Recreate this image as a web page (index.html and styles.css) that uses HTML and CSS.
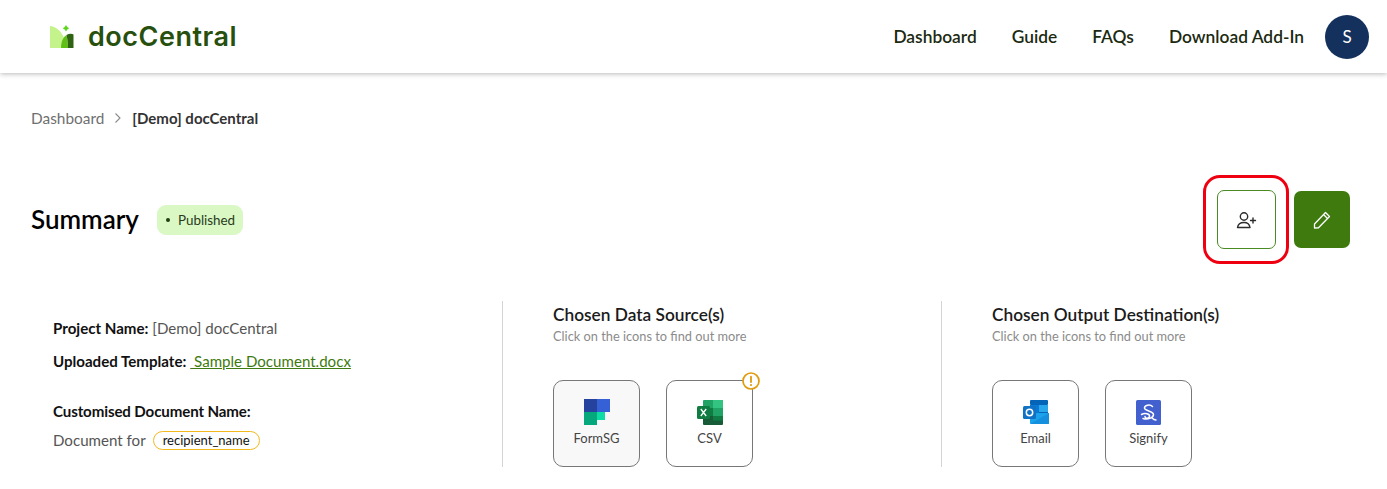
FILE: index.html
```html
<!DOCTYPE html>
<html lang="en">
<head>
<meta charset="utf-8">
<title>docCentral</title>
<link rel="stylesheet" href="styles.css">
</head>
<body>
<header class="topbar">
  <div class="brand">
    <svg class="brand-mark" width="24" height="23" viewBox="0 0 24 23">
      <path d="M0 1 C8 2 14 8 17 23 H0 Z" fill="#c4f28b"/>
      <path d="M11 23 C11 17 13 12 16.500 10 C17.500 14 18 19 18 23 Z" fill="#5fbf14"/>
      <path d="M16.500 10 C19 8.500 22 8.500 23.500 9.500 V23 H18 C18 19 17.500 14 16.500 10 Z" fill="#2f6212"/>
      <path d="M16 0 L17.300 2 L19.300 3.300 L17.300 4.600 L16 6.600 L14.700 4.600 L12.700 3.300 L14.700 2 Z" fill="#5fd61e"/>
    </svg>
    <span class="brand-name">docCentral</span>
  </div>
  <nav class="nav">
    <a>Dashboard</a>
    <a>Guide</a>
    <a>FAQs</a>
    <a>Download Add-In</a>
    <span class="avatar">S</span>
  </nav>
</header>
<main class="page">
  <div class="crumbs">
    <span class="crumb-link">Dashboard</span>
    <svg class="crumb-sep" width="8" height="12" viewBox="0 0 8 12"><path d="M1.500 1.500 L6 6 L1.500 10.500" fill="none" stroke="#8a8a8a" stroke-width="1.100"/></svg>
    <span class="crumb-current">[Demo] docCentral</span>
  </div>
  <section class="summary-head">
    <div class="title-group">
      <h1>Summary</h1>
      <span class="badge"><i class="dot"></i>Published</span>
    </div>
    <div class="actions">
      <div class="highlight">
        <button class="btn-outline" aria-label="Share">
          <svg width="22" height="22" viewBox="1 0 22 22" fill="none" stroke="#2b2b2b" stroke-width="1.400" stroke-linecap="round"><circle cx="9" cy="7.500" r="3.700"/><path d="M2.500 18.500 C3 15 5.500 13.500 9 13.500 C12.500 13.500 14.500 15 15 18.500 Z" stroke-linejoin="round"/><path d="M15.500 11.500 H20.500 M18 9 V14"/></svg>
        </button>
      </div>
      <button class="btn-solid" aria-label="Edit">
        <svg width="22" height="22" viewBox="0 0 22 22" fill="none" stroke="#fff" stroke-width="1.300" stroke-linejoin="round"><path d="M3.500 15 L14.500 3.500 L18.500 7.500 L7.500 18.800 L3.500 19 Z"/><path d="M12.500 5.500 L16.500 9.500"/></svg>
      </button>
    </div>
  </section>
  <section class="columns">
    <div class="col col-info">
      <p class="line"><b>Project Name:</b> <span class="muted">[Demo] docCentral</span></p>
      <p class="line"><b>Uploaded Template:</b> <a class="file">&nbsp;Sample Document.docx</a></p>
      <p class="line line-gap"><b class="tight">Customised Document Name:</b></p>
      <p class="line line-doc"><span class="muted">Document for</span><span class="tag">recipient_name</span></p>
    </div>
    <div class="col col-rule">
      <h2>Chosen Data Source(s)</h2>
      <p class="hint">Click on the icons to find out more</p>
      <div class="cards">
        <div class="card card-active">
          <svg width="26" height="26" viewBox="0 0 26 26"><rect width="13" height="13" fill="#24429e"/><rect x="13" width="13" height="13" fill="#3560d6"/><rect y="13" width="13" height="13" fill="#05a77c"/><path d="M13 13 H21 V21 H13 Z" fill="#0cdca5"/></svg>
          <span>FormSG</span>
        </div>
        <div class="card">
          <svg width="26" height="26" viewBox="0 -1 26 26"><rect x="6" width="20" height="8" rx="1" fill="#21a366"/><rect x="16" width="10" height="8" fill="#33c481"/><rect x="6" y="8" width="20" height="8" fill="#107c41"/><rect x="16" y="8" width="10" height="8" fill="#21a366"/><rect x="6" y="16" width="20" height="9" rx="1" fill="#185c37"/><rect x="16" y="16" width="10" height="4.500" fill="#107c41"/><rect y="6" width="13" height="13" rx="1.500" fill="#107c41"/><path d="M3.800 9 L9.200 16 M9.200 9 L3.800 16" fill="none" stroke="#fff" stroke-width="1.300"/></svg>
          <span>CSV</span>
          <svg class="warn" width="18" height="18" viewBox="0 0 18 18"><circle cx="9" cy="9" r="8" fill="#fff" stroke="#e09a0b" stroke-width="1.700"/><path d="M9 4.700 V10" stroke="#e09a0b" stroke-width="1.800" stroke-linecap="round"/><circle cx="9" cy="13" r="1.100" fill="#e09a0b"/></svg>
        </div>
      </div>
    </div>
    <div class="col col-rule col-last">
      <h2>Chosen Output Destination(s)</h2>
      <p class="hint">Click on the icons to find out more</p>
      <div class="cards">
        <div class="card">
          <svg width="26" height="26" viewBox="0 0 26 26"><rect x="7" y="1" width="18" height="5" rx="1" fill="#0364b8"/><rect x="7" y="6" width="9" height="7" fill="#0a78d4"/><rect x="16" y="6" width="9" height="7" fill="#28a8ea"/><rect x="7" y="13" width="9" height="7" fill="#0078d4"/><rect x="16" y="13" width="9" height="7" fill="#0364b8"/><path d="M7 14 L26 14 V24 A1 1 0 0 1 25 25 H8 A1 1 0 0 1 7 24 Z" fill="#1aa3ea"/><path d="M7 25 L26 14 V24 A1 1 0 0 1 25 25 Z" fill="#1490df"/><rect y="7" width="13" height="13" rx="1.500" fill="#0f72c4"/><circle cx="6.500" cy="13.500" r="3.200" fill="none" stroke="#fff" stroke-width="1.500"/></svg>
          <span>Email</span>
        </div>
        <div class="card">
          <svg width="25" height="26" viewBox="0 -1 25 26"><rect width="25" height="25" rx="1.500" fill="#4360cf"/><path d="M16.500 6.500 C14 4 8.500 5 8.500 8 C8.500 11 17.500 11 17.500 14.500 C17.500 18 11.500 20 7 18.500 M5.500 14.500 C9 12.500 14 14 13.500 16.500 C13 19 9 18.500 9 16.500 M16 18 C17 19 18.500 20 20 20" fill="none" stroke="#fff" stroke-width="1.500" stroke-linecap="round"/></svg>
          <span>Signify</span>
        </div>
      </div>
    </div>
  </section>
</main>
</body>
</html>
```
FILE: styles.css
```css
* { box-sizing: border-box; }
html, body { margin: 0; padding: 0; }
body {
  height: 489px;
  overflow: hidden;
  background: #fff;
  font-family: "Lato", "Liberation Sans", sans-serif;
  color: #111;
}
.topbar {
  height: 73px;
  display: flex;
  align-items: center;
  justify-content: space-between;
  padding: 0 18px 0 50px;
  box-shadow: 0 1px 5px rgba(0,0,0,.28);
}
.brand { display: flex; align-items: center; gap: 14px; }
.brand-name {
  font-family: "Inter", sans-serif;
  font-size: 27px;
  font-weight: 600;
  letter-spacing: .5px;
  color: #27500f;
}
.nav { display: flex; align-items: center; gap: 35px; }
.nav a {
  font-size: 17.35px;
  font-weight: 600;
  color: #1c2a12;
}
.avatar {
  width: 44px;
  height: 44px;
  margin-left: -14px;
  border-radius: 50%;
  background: #14305c;
  color: #fff;
  display: flex;
  align-items: center;
  justify-content: center;
  font-size: 17px;
}
.page { padding: 0 37px 0 31px; }
.crumbs {
  display: flex;
  align-items: center;
  gap: 10px;
  margin-top: 35px;
  height: 20px;
  font-size: 15.4px;
}
.crumb-link { color: #6f6f6f; }
.crumb-current { font-size: 15px; font-weight: 700; color: #333; }
.summary-head {
  display: flex;
  justify-content: space-between;
  align-items: center;
  margin-top: 47px;
  height: 89px;
}
.title-group { display: flex; align-items: center; gap: 18px; }
h1 { margin: 0 0 2px; font-size: 26px; font-weight: 600; color: #000; }
.badge {
  display: flex;
  align-items: center;
  height: 30px;
  padding: 0 8px 0 9px;
  border-radius: 9px;
  background: #d9f8c4;
  font-size: 13.400px;
  color: #2a3a20;
}
.dot {
  width: 4px;
  height: 4px;
  border-radius: 50%;
  background: #1f3d10;
  margin-right: 8px;
}
.actions { display: flex; align-items: center; gap: 5px; }
.highlight {
  padding: 12px 10px 12px 11px;
  border: 3px solid #ee0010;
  border-radius: 17px;
}
.btn-outline, .btn-solid {
  display: flex;
  align-items: center;
  justify-content: center;
  width: 59px;
  height: 59px;
  padding: 0;
  border-radius: 7px;
}
.btn-outline { background: #fff; border: 1px solid #4a8a23; }
.btn-solid { width: 56px; height: 57px; background: #3f7a0e; border: 0; }
.columns {
  display: grid;
  grid-template-columns: 471px 439px 1fr;
  margin-top: 37px;
  height: 166px;
}
.col-info { padding: 17px 0 0 22px; }
.col-rule { border-left: 1px solid #d4d4d4; padding: 3px 0 0 50px; }
.line { margin: 0 0 13px; font-size: 15.100px; line-height: 20px; }
.line b { font-weight: 700; color: #111; }
.line b.tight { letter-spacing: -.12px; }
.muted { color: #555; }
.file { color: #3f7a0e; text-decoration: underline; }
.line-gap { margin-top: 30px; margin-bottom: 9px; }
.line-doc { display: flex; align-items: center; gap: 7px; }
.tag {
  display: inline-flex;
  align-items: center;
  height: 19px;
  padding: 0 9px;
  border: 1px solid #f2b91d;
  border-radius: 10px;
  font-size: 13px;
  color: #111;
}
h2 { margin: 0; font-size: 17.300px; line-height: 22px; font-weight: 600; color: #1b1b1b; }
.hint { margin: 1px 0 0; font-size: 12.800px; line-height: 18px; color: #8b8b8b; }
.cards { display: flex; gap: 26px; margin-top: 35px; }
.card {
  position: relative;
  width: 87px;
  height: 87px;
  border: 1px solid #777;
  border-radius: 10px;
  display: flex;
  flex-direction: column;
  align-items: center;
  padding-top: 18px;
  gap: 5px;
  font-size: 13px;
  line-height: 17px;
  color: #444;
}
.card-active { background: #f8f8f8; }
.card svg { flex: none; }
.card .warn { position: absolute; top: -9px; right: -8px; }
```
